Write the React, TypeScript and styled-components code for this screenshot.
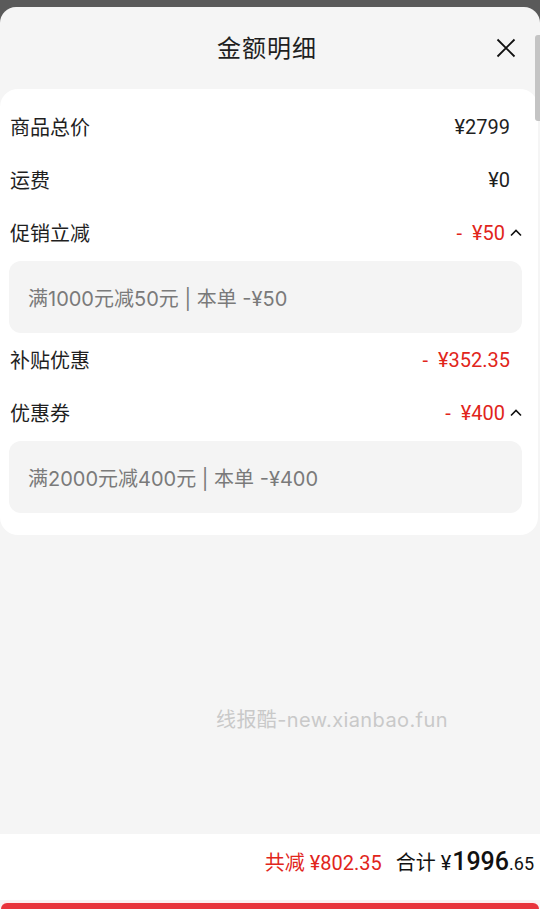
import React from 'react'
import styled, { createGlobalStyle } from 'styled-components'

const colors = {
  overlay: '#5a5a5a',
  sheet: '#f5f5f5',
  text: '#1f1f1f',
  muted: '#7a7a7a',
  red: '#e1251b',
  watermark: '#c9c9c9',
}

const numberFont = 'Roboto, "Noto Sans CJK SC", sans-serif'

const GlobalStyle = createGlobalStyle`
  html, body {
    margin: 0;
    padding: 0;
    background: ${colors.overlay};
  }
  body {
    font-family: Inter, "Noto Sans CJK SC", sans-serif;
    color: ${colors.text};
  }
`

const Screen = styled('div')({
  width: '540px',
  height: '909px',
  paddingTop: '7px',
  boxSizing: 'border-box',
  overflow: 'hidden',
  position: 'relative',
})

const Sheet = styled('div')({
  height: '902px',
  background: colors.sheet,
  borderRadius: '16px 16px 0 0',
  display: 'flex',
  flexDirection: 'column',
  position: 'relative',
})

const Scrollbar = styled('div')({
  position: 'absolute',
  right: 0,
  top: '28px',
  width: '5px',
  height: '86px',
  borderRadius: '3px 0 0 3px',
  background: '#c4c4c4',
})

const Header = styled('div')({
  height: '82px',
  display: 'flex',
  alignItems: 'center',
  justifyContent: 'center',
  position: 'relative',
})

const Title = styled('h1')({
  margin: 0,
  fontSize: '24px',
  fontWeight: 400,
  letterSpacing: '1px',
  marginLeft: '-6px',
  marginTop: '-4px',
})

const CloseButton = styled('button')({
  position: 'absolute',
  right: '24px',
  top: '31px',
  width: '20px',
  height: '20px',
  padding: 0,
  border: 'none',
  background: 'transparent',
  display: 'flex',
})

const Card = styled('div')({
  background: '#fff',
  borderRadius: '18px',
  margin: '0 2px 0 0',
  padding: '11px 0 22px',
})

const Row = styled('div')({
  height: '53px',
  display: 'flex',
  alignItems: 'center',
  justifyContent: 'space-between',
  padding: '0 16px 0 10px',
  fontSize: '20px',
})

const Label = styled('span')({
  color: colors.text,
})

const Value = styled('span')<{ $red?: boolean; $toggle?: boolean }>((p) => ({
  display: 'flex',
  alignItems: 'center',
  fontFamily: numberFont,
  color: p.$red ? colors.red : colors.text,
  marginRight: p.$toggle ? '0' : '12px',
  fontSize: '20px',
  whiteSpace: 'pre',
}))

const Chevron = styled('svg')({
  marginLeft: '5px',
  width: '12px',
  height: '8px',
})

const Detail = styled('div')({
  margin: '2px 16px 0 9px',
  height: '72px',
  borderRadius: '12px',
  background: '#f4f4f4',
  display: 'flex',
  alignItems: 'center',
  padding: '0 19px',
  fontSize: '20px',
  color: colors.muted,
})

const Filler = styled('div')({
  flex: 1,
  paddingTop: '169px',
  paddingLeft: '216px',
})

const Watermark = styled('div')({
  fontSize: '20px',
  color: colors.watermark,
  letterSpacing: '0.4px',
})

const Footer = styled('div')({
  height: '66px',
  background: '#fff',
  display: 'flex',
  alignItems: 'center',
  justifyContent: 'flex-end',
  padding: '0 6px 11px 0',
  boxSizing: 'border-box',
  gap: '14px',
  fontFamily: numberFont,
})

const Saved = styled('span')({
  color: colors.red,
  fontSize: '20px',
})

const Total = styled('span')({
  fontSize: '20px',
  color: '#111',
  display: 'flex',
  alignItems: 'baseline',
})

const Big = styled('span')({
  fontSize: '25px',
  fontWeight: 500,
  marginLeft: '1px',
})

const Cents = styled('span')({
  fontSize: '18px',
})

const ActionBar = styled('div')({
  height: '6px',
  background: '#e8333b',
  borderRadius: '10px 10px 0 0',
  margin: '3px 1px 0',
  boxShadow: '0 -2px 2px #fdecef',
})

type Line = {
  label: string
  value: string
  red?: boolean
  detail?: string
}

const lines: Line[] = [
  { label: '商品总价', value: '¥2799' },
  { label: '运费', value: '¥0' },
  { label: '促销立减', value: '-  ¥50', red: true, detail: '满1000元减50元 | 本单 -¥50' },
  { label: '补贴优惠', value: '-  ¥352.35', red: true },
  { label: '优惠券', value: '-  ¥400', red: true, detail: '满2000元减400元 | 本单 -¥400' },
]

function ChevronUp() {
  return (
    <Chevron viewBox="0 0 12 8">
      <path d="M1 6.5 L6 1.5 L11 6.5" fill="none" stroke="#111" strokeWidth="1.6" />
    </Chevron>
  )
}

export default function App() {
  return (
    <Screen>
      <GlobalStyle />
      <Sheet>
        <Scrollbar />
        <Header>
          <Title>金额明细</Title>
          <CloseButton aria-label="关闭">
            <svg viewBox="0 0 20 20" width="20" height="20">
              <path d="M1.5 1.5 L18.5 18.5 M18.5 1.5 L1.5 18.5" stroke="#111" strokeWidth="1.8" fill="none" />
            </svg>
          </CloseButton>
        </Header>
        <Card>
          {lines.map((line) => (
            <React.Fragment key={line.label}>
              <Row>
                <Label>{line.label}</Label>
                <Value $red={line.red} $toggle={!!line.detail}>
                  {line.value}
                  {line.detail && <ChevronUp />}
                </Value>
              </Row>
              {line.detail && <Detail>{line.detail}</Detail>}
            </React.Fragment>
          ))}
        </Card>
        <Filler>
          <Watermark>线报酷-new.xianbao.fun</Watermark>
        </Filler>
        <Footer>
          <Saved>共减 ¥802.35</Saved>
          <Total>
            合计 ¥<Big>1996</Big>
            <Cents>.65</Cents>
          </Total>
        </Footer>
        <ActionBar />
      </Sheet>
    </Screen>
  )
}
